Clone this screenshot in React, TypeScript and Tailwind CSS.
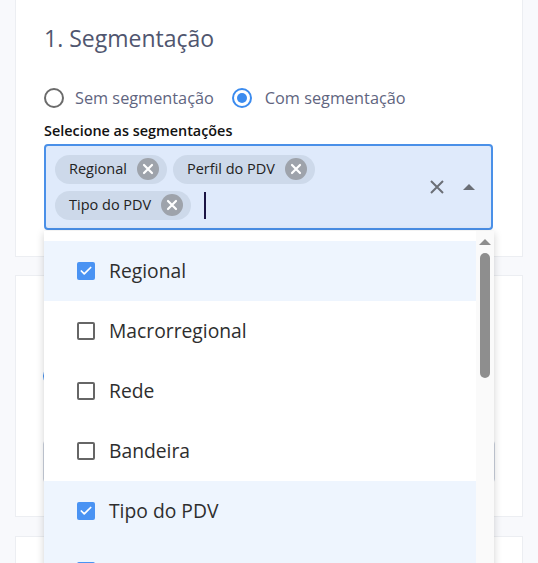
import { Check } from "lucide-react";

const options = [
  { label: "Regional", checked: true },
  { label: "Macrorregional", checked: false },
  { label: "Rede", checked: false },
  { label: "Bandeira", checked: false },
  { label: "Tipo do PDV", checked: true },
  { label: "Perfil do PDV", checked: true },
];

function Chip({ label }: { label: string }) {
  return (
    <span className="flex h-[29px] items-center gap-[10px] rounded-full bg-[#cdd9ea] pl-[14px] pr-[8px] text-[14.5px] text-[#222]">
      {label}
      <span className="flex h-[22px] w-[22px] items-center justify-center rounded-full bg-[#9ea3ab]">
        <svg width="12" height="12" viewBox="0 0 12 12">
          <path d="M2 2L10 10M10 2L2 10" stroke="white" strokeWidth="2.2" strokeLinecap="round" />
        </svg>
      </span>
    </span>
  );
}

function Radio({ checked }: { checked: boolean }) {
  return checked ? (
    <span className="flex h-[20px] w-[20px] items-center justify-center rounded-full border-2 border-[#3b8bef]">
      <span className="h-[10px] w-[10px] rounded-full bg-[#3b8bef]" />
    </span>
  ) : (
    <span className="h-[20px] w-[20px] rounded-full border-2 border-[#6b6b6b]" />
  );
}

export default function App() {
  return (
    <div className="h-[563px] overflow-hidden bg-[#f8f9fc] px-[15px] font-['Open_Sans',sans-serif]">
      <section className="border-x border-b border-[#eceef2] bg-white pb-[26px] pl-[28px] pr-[29px] pt-[24px]">
        <h2 className="text-[23px] leading-[28px] text-[#50566f]">1. Segmentação</h2>

        <div className="mt-[34px] flex h-[24px] items-center text-[16.3px] text-[#5f6580]">
          <Radio checked={false} />
          <span className="ml-[11px]">Sem segmentação</span>
          <span className="ml-[18px]"><Radio checked /></span>
          <span className="ml-[13px]">Com segmentação</span>
        </div>

        <label className="mt-[11px] block text-[14.4px] font-semibold leading-[20px] text-[#111]">
          Selecione as segmentações
        </label>

        <div className="relative mt-[3px]">
          <div className="flex h-[86px] items-center rounded-[4px] border-2 border-[#4a90e8] bg-[#dfeafb] pl-[9px] pr-[16px]">
            <div className="flex w-[365px] flex-wrap items-center gap-x-[6px] gap-y-[7px]">
              <Chip label="Regional" />
              <Chip label="Perfil do PDV" />
              <Chip label="Tipo do PDV" />
              <span className="ml-[7px] h-[27px] w-[2px] bg-[#1b1444]" />
            </div>
            <div className="ml-auto flex items-center gap-[19px]">
              <svg width="14" height="14" viewBox="0 0 14 14">
                <path d="M1 1L13 13M13 1L1 13" stroke="#6b6f76" strokeWidth="2" />
              </svg>
              <svg width="12" height="6" viewBox="0 0 12 6">
                <path d="M0 6L6 0L12 6Z" fill="#6b6f76" />
              </svg>
            </div>
          </div>

          <div className="absolute left-0 top-[calc(100%+1px)] z-10 flex h-[340px] w-[450px] bg-white shadow-[0_2px_8px_rgba(0,0,0,0.18)]">
            <ul className="flex-1 pt-[10px]">
              {options.map((o) => (
                <li
                  key={o.label}
                  className={`flex h-[60px] items-center gap-[14px] pl-[33px] text-[19.3px] text-[#2e2e2e] ${o.checked ? "bg-[#eef5fe]" : ""}`}
                >
                  {o.checked ? (
                    <span className="flex h-[18px] w-[18px] items-center justify-center rounded-[2px] bg-[#4a93f3]">
                      <Check size={14} strokeWidth={3} color="white" />
                    </span>
                  ) : (
                    <span className="h-[18px] w-[18px] rounded-[2px] border-2 border-[#666]" />
                  )}
                  {o.label}
                </li>
              ))}
            </ul>
            <div className="flex w-[18px] flex-col items-center bg-[#fafafa] pt-[8px]">
              <svg width="12" height="6" viewBox="0 0 12 6">
                <path d="M0 6L6 0L12 6Z" fill="#8e8e8e" />
              </svg>
              <span className="mt-[8px] h-[125px] w-[10px] rounded-full bg-[#8e8e8e]" />
            </div>
          </div>
        </div>
      </section>

      <section className="mt-[18px] h-[242px] border border-[#eceef2] bg-white pl-[27px] pr-[27px] pt-[90px]">
        <Radio checked />
        <div className="mt-[54px] h-[43px] rounded-[4px] border border-[#cbd2de]" />
      </section>

      <section className="mt-[19px] h-[60px] border border-[#eceef2] bg-white" />
    </div>
  );
}
